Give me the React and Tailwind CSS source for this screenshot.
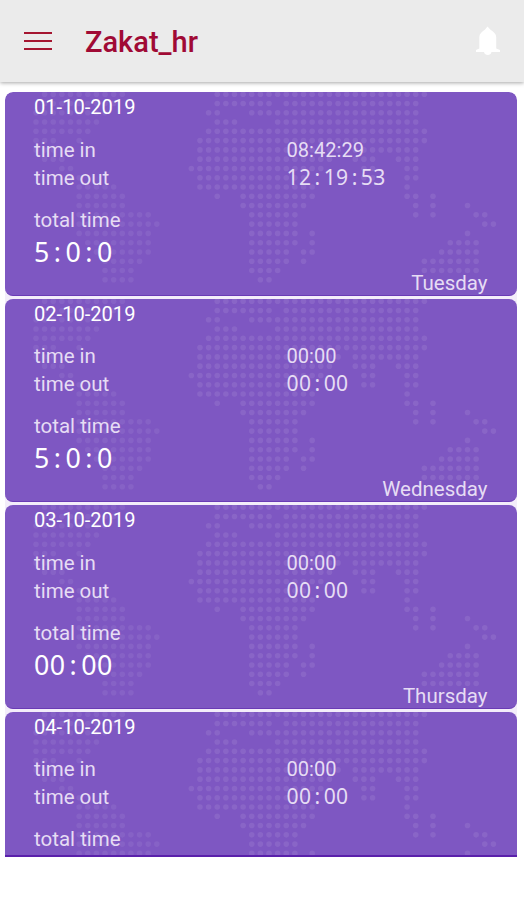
import React from 'react';

const DAYS = [
    { date: '01-10-2019', timeIn: '08:42:29', timeOut: '12:19:53', total: '5:0:0', day: 'Tuesday' },
    { date: '02-10-2019', timeIn: '00:00', timeOut: '00:00', total: '5:0:0', day: 'Wednesday' },
    { date: '03-10-2019', timeIn: '00:00', timeOut: '00:00', total: '00:00', day: 'Thursday' },
    { date: '04-10-2019', timeIn: '00:00', timeOut: '00:00' },
];

// Each row lists [first, last] columns that hold a dot
const MAP_ROWS = [
    [[1, 10], [21, 45]],
    [[1, 9], [21, 27], [29, 44]],
    [[0, 8], [20, 21], [25, 44]],
    [[0, 7], [21, 23], [28, 44]],
    [[0, 6], [20, 45]],
    [[0, 2], [5, 5], [19, 45]],
    [[0, 2], [19, 35], [37, 44]],
    [[1, 3], [19, 34], [37, 39], [42, 44]],
    [[3, 4], [18, 33], [38, 39], [43, 44]],
    [[4, 5], [19, 31], [38, 39], [43, 44]],
    [[5, 9], [19, 32], [43, 43]],
    [[5, 10], [21, 21], [24, 32], [43, 44], [46, 46]],
    [[5, 10], [24, 31], [44, 44], [46, 46], [50, 50]],
    [[5, 13], [25, 30], [44, 44], [46, 46], [51, 52]],
    [[5, 14], [25, 30], [52, 53]],
    [[5, 13], [25, 30], [32, 32], [50, 50]],
    [[6, 13], [25, 30], [32, 32], [48, 51]],
    [[7, 13], [25, 29], [31, 32], [47, 51]],
    [[8, 12], [25, 29], [31, 31], [45, 51]],
    [[8, 11], [25, 28], [45, 51]],
    [[8, 11], [26, 27]],
];

const DOTS = MAP_ROWS.flatMap((ranges, row) =>
    ranges.flatMap(([from, to]) =>
        Array.from({ length: to - from + 1 }, (_, i) => ({
            x: 31 + (from + i) * 8.63,
            y: 2.2 + row * 9.28,
            // the Americas are a little fainter than the rest
            opacity: from < 15 ? 0.065 : 0.085,
        }))
    )
);

const WorldMap = () => (
    <svg className="absolute inset-0" width="512" height="203" viewBox="0 0 512 203" fill="#fff">
        {DOTS.map(({ x, y, opacity }) => (
            <circle key={`${x}-${y}`} cx={x} cy={y} r="2.8" fillOpacity={opacity} />
        ))}
    </svg>
);

// Clock digits, every character takes the same cell
const MonoTime = ({ value, className }) => (
    <span className={`font-['Noto_Sans',sans-serif] tracking-[0.015em] ${className}`}>
        {value.split(/(:)/).map((part, i) =>
            part === ':' ? <span key={i} className="px-[0.152em]">:</span> : part
        )}
    </span>
);

const DayCard = ({ entry }) => (
    <div className="relative h-[203.5px] shrink-0 overflow-hidden rounded-lg border-b border-[#6a3bb5] bg-[#7e57c2] pl-[29px] pr-[29.5px] text-[20.5px] text-[#e6dcf4]">
        <WorldMap />
        <div className="relative">
            <p className="leading-[30px] text-white text-[20.1px]">{entry.date}</p>
            <div className="mt-[13.5px] grid grid-cols-[252.5px_1fr] leading-7">
                <span>time in</span>
                <span className="text-[20.1px]">{entry.timeIn}</span>
                <span>time out</span>
                <MonoTime value={entry.timeOut} className="leading-[26px] text-[21.1px]" />
            </div>
            <p className="mt-3.5 leading-7">total time</p>
            {entry.total && (
                <p className="mt-px h-[34px] leading-[34px]">
                    <MonoTime value={entry.total} className="text-[26.8px] text-white" />
                </p>
            )}
            {entry.day && <p className="mt-px text-right leading-[26px]">{entry.day}</p>}
        </div>
    </div>
);

const Header = () => (
    <header className="relative flex h-[82px] items-center bg-[#ebebeb] pl-6 pr-6 shadow-[0_1px_4px_rgba(0,0,0,0.35)]">
        <button className="flex flex-col gap-[5.5px]" aria-label="menu">
            <span className="h-[2.5px] w-[28px] bg-[#a51530]" />
            <span className="h-[2.5px] w-[28px] bg-[#a51530]" />
            <span className="h-[2.5px] w-[28px] bg-[#a51530]" />
        </button>
        <h1 className="ml-[33px] flex-1 pt-[2px] text-[29px] font-medium leading-9 text-[#a00a35]">Zakat_hr</h1>
        <svg width="24" height="30" viewBox="0 0 24 30" fill="#fff" aria-label="notifications">
            <path d="M11.5 0.5L14.5 3.8C17.5 5.8 20.2 8 20.2 11V22.5L24 24V26H0V24L3.3 22.5V11C3.3 8 6 5.8 8.8 3.8Z" />
            <path d="M8 26H15.5C15 28.3 13.6 29 11.8 29S8.5 28.3 8 26Z" />
        </svg>
    </header>
);

const App = () => (
    <div className="flex h-[900px] w-[524px] flex-col bg-white font-[Roboto,sans-serif]">
        <Header />
        <main className="ml-[5px] mr-[7px] mt-[10px] flex h-[764.5px] flex-col gap-[3px] overflow-hidden rounded-t-lg border-b-2 border-[#5a20ab] bg-[#f3edfa]">
            {DAYS.map((entry) => (
                <DayCard key={entry.date} entry={entry} />
            ))}
        </main>
    </div>
);

export default App;
